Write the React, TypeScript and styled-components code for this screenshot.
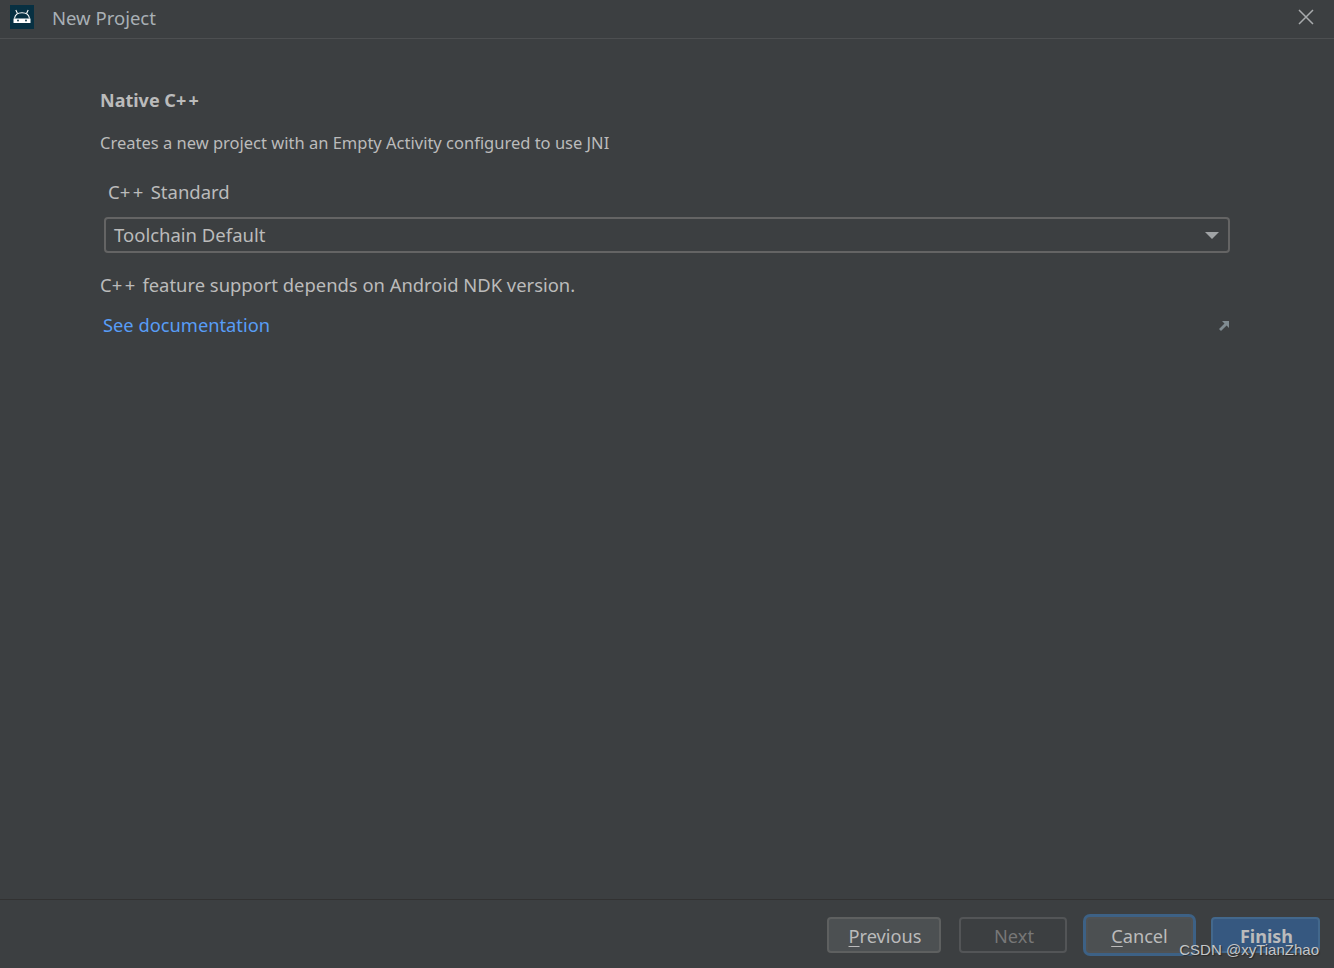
import styled, { createGlobalStyle } from 'styled-components';

const Global = createGlobalStyle`
  html, body {
    margin: 0;
    padding: 0;
    background: #3c3f41;
  }
`;

const Wrapper = styled.div`
  position: relative;
  width: 1334px;
  height: 968px;
  overflow: hidden;
  display: flex;
  flex-direction: column;
  background: #3c3f41;
  color: #bbbbbb;
  font-family: 'Noto Sans', 'Open Sans', sans-serif;
`;
const TitleBar = styled.div`
  height: 39px;
  flex-shrink: 0;
  display: flex;
  align-items: center;
  padding: 0 20px 4px 10px;
  box-sizing: border-box;
  border-bottom: 1px solid #4d4f51;
`;
const AppIcon = styled.div`
  width: 24px;
  height: 24px;
  background: #073042;
  display: flex;
  align-items: center;
  justify-content: center;
`;
const WindowTitle = styled.div`
  margin: 0 0 0 18px;
  font-size: 18.5px;
  color: #a9b0b5;
`;
const Close = styled.div`
  margin-left: auto;
  display: flex;
  color: #a8abad;
`;
const Content = styled.div`
  flex: 1;
  padding: 49px 104px 0 100px;
`;
const Heading = styled.div`
  font-size: 18px;
  font-weight: 700;
  line-height: 24px;
  color: #bbbbbb;
`;
const Description = styled.div`
  margin-top: 19px;
  font-size: 16.5px;
  line-height: 24px;
  color: #bbbbbb;
`;
const FieldLabel = styled.div`
  margin-top: 24px;
  padding-left: 8px;
  font-size: 18.5px;
  line-height: 26px;
`;
const Plus = styled.span`
  letter-spacing: 0.135em;
`;
const Select = styled.div`
  margin: 12px 0 0 4px;
  height: 36px;
  box-sizing: border-box;
  border: 2px solid #646464;
  border-radius: 4px;
  padding: 0 9px 2px 8px;
  display: flex;
  align-items: center;
  justify-content: space-between;
  font-size: 18.5px;
`;
const Caret = styled.div`
  width: 0;
  height: 0;
  margin-top: 2px;
  border-left: 7px solid transparent;
  border-right: 7px solid transparent;
  border-top: 7px solid #a0a3a5;
`;
const Hint = styled.div`
  margin-top: 19px;
  font-size: 18.4px;
  line-height: 26px;
`;
const LinkRow = styled.div`
  margin-top: 14px;
  padding-left: 3px;
  display: flex;
  align-items: center;
  justify-content: space-between;
  line-height: 26px;
`;
const DocLink = styled.a`
  font-size: 18.3px;
  color: #589df6;
`;
const External = styled.div`
  display: flex;
  padding: 2px 1px 0 0;
  color: #7f8b91;
`;
const Footer = styled.div`
  height: 69px;
  flex-shrink: 0;
  box-sizing: border-box;
  border-top: 1px solid #323232;
  padding: 17px 14px 0 0;
  display: flex;
  justify-content: flex-end;
  gap: 18px;
`;
const Button = styled.div<{ $width: number; $variant?: 'disabled' | 'focused' | 'primary' }>`
  width: ${(p) => p.$width}px;
  height: 36px;
  box-sizing: border-box;
  border-radius: 4px;
  display: flex;
  align-items: center;
  justify-content: center;
  padding: 2px 0 0 ${(p) => (p.$variant === 'focused' ? 0 : 2)}px;
  font-size: ${(p) => (p.$variant === 'primary' ? 18 : 18.2)}px;
  margin-left: ${(p) => (p.$variant === 'focused' ? 1 : 0)}px;
  border: 2px solid
    ${(p) =>
      p.$variant === 'disabled' ? '#535557' : p.$variant === 'primary' ? '#43688c' : p.$variant === 'focused' ? '#4f5254' : '#5e6060'};
  background: ${(p) =>
    p.$variant === 'disabled' ? 'transparent' : p.$variant === 'primary' ? '#365880' : '#4c5052'};
  color: ${(p) => (p.$variant === 'disabled' ? '#777777' : '#bbbbbb')};
  font-weight: ${(p) => (p.$variant === 'primary' ? 700 : 400)};
  box-shadow: ${(p) => (p.$variant === 'focused' ? '0 0 0 3px #3d6185' : 'none')};
`;
const Mnemonic = styled.span`
  text-decoration: underline;
  text-underline-offset: 3px;
`;
const Watermark = styled.div`
  position: absolute;
  right: 15px;
  top: 940px;
  font-family: 'Liberation Sans', Arial, sans-serif;
  font-size: 15px;
  line-height: 19px;
  color: #c4c6c8;
  text-shadow: 1px 1px 1px #2a2a2a;
`;

export default function App() {
  return (
    <Wrapper>
      <Global />
      <TitleBar>
        <AppIcon>
          <svg width="20" height="16" viewBox="0 0 20 16">
            <path d="M2.500 9.500 C3 6 5.500 3.800 10 3.800 C14.500 3.800 17 6 17.500 9.500" fill="none" stroke="#fff" strokeWidth="1.100" />
            <path d="M1.500 9.500 H18.500 V14 H1.500 Z" fill="#fff" />
            <path d="M5.500 4.500 L3.800 1 M14.500 4.500 L16.200 1" stroke="#fff" strokeWidth="1.100" />
            <circle cx="6" cy="11.500" r="0.900" fill="#073042" />
            <circle cx="14" cy="11.500" r="0.900" fill="#073042" />
          </svg>
        </AppIcon>
        <WindowTitle>New Project</WindowTitle>
        <Close>
          <svg width="16" height="16" viewBox="0 0 16 16" fill="none" stroke="currentColor" strokeWidth="1.500">
            <path d="M1 1 L15 15 M15 1 L1 15" />
          </svg>
        </Close>
      </TitleBar>
      <Content>
        <Heading>
          Native C<Plus>++</Plus>
        </Heading>
        <Description>Creates a new project with an Empty Activity configured to use JNI</Description>
        <FieldLabel>
          C<Plus>++</Plus> Standard
        </FieldLabel>
        <Select>
          Toolchain Default
          <Caret />
        </Select>
        <Hint>
          C<Plus>++</Plus> feature support depends on Android NDK version.
        </Hint>
        <LinkRow>
          <DocLink>See documentation</DocLink>
          <External>
            <svg width="10" height="10" viewBox="0 0 10 10" fill="currentColor">
              <path d="M3 0 H10 V7 L7.600 4.600 L2 10 L0 8 L5.500 2.400 Z" />
            </svg>
          </External>
        </LinkRow>
      </Content>
      <Footer>
        <Button $width={114}>
          <span>
            <Mnemonic>P</Mnemonic>revious
          </span>
        </Button>
        <Button $width={108} $variant="disabled">
          Next
        </Button>
        <Button $width={107} $variant="focused">
          <span>
            <Mnemonic>C</Mnemonic>ancel
          </span>
        </Button>
        <Button $width={109} $variant="primary">
          Finish
        </Button>
      </Footer>
      <Watermark>CSDN @xyTianZhao</Watermark>
    </Wrapper>
  );
}
